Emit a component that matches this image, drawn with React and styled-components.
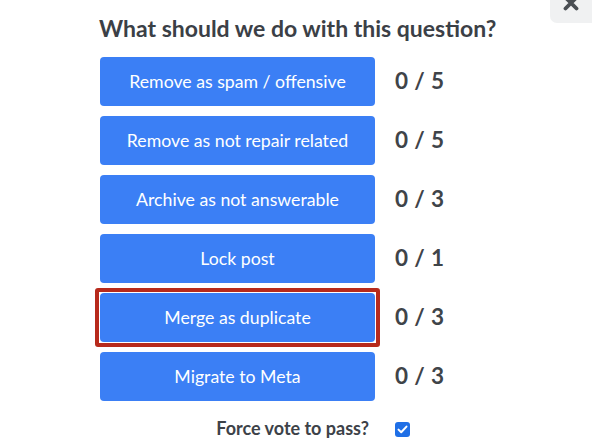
import React from "react";
import styled, { createGlobalStyle } from "styled-components";

const GlobalStyle = createGlobalStyle`
  html, body {
    margin: 0;
    padding: 0;
    background: #ffffff;
    font-family: Lato, "Liberation Sans", sans-serif;
    overflow: hidden;
  }
`;

const Page = styled.div`
  position: relative;
  width: 592px;
  height: 444px;
  padding: 14px 0 0 99px;
  box-sizing: border-box;
`;

const CloseButton = styled.div`
  position: absolute;
  top: -20px;
  right: -12px;
  width: 54px;
  height: 43px;
  border-radius: 7px;
  background: #f0f1f2;
  display: flex;
  align-items: flex-start;
  justify-content: flex-start;
  padding: 15px 0 0 13px;
  box-sizing: border-box;
  color: #4a4e53;
`;

const Title = styled.h2`
  margin: 0 0 15px 0;
  font-size: 23px;
  line-height: 28px;
  font-weight: 700;
  color: #3b4046;
`;

const Grid = styled.div`
  display: grid;
  grid-template-columns: 276px auto;
  column-gap: 20px;
  row-gap: 10px;
  align-items: center;
`;

const ActionButton = styled.button`
  position: relative;
  height: 49px;
  margin-left: 1px;
  border: none;
  border-radius: 4px;
  background: #3b7ff5;
  color: #ffffff;
  font-family: Lato, "Liberation Sans", sans-serif;
  font-size: 17.7px;
  font-weight: 400;

  &::after {
    content: "";
    display: ${(p) => (p.$selected ? "block" : "none")};
    position: absolute;
    inset: -5px;
    border: 4px solid #b72a1c;
    border-radius: 3px;
    pointer-events: none;
  }
`;

const Count = styled.span`
  font-size: 22.5px;
  font-weight: 700;
  color: #3f4449;
  letter-spacing: 0.4px;
  margin-top: -3px;
`;

const OptionRow = styled.div`
  grid-column: 1 / -1;
  display: grid;
  grid-template-columns: 276px auto;
  column-gap: 20px;
  align-items: center;
  margin-top: 6px;
`;

const Label = styled.label`
  text-align: right;
  padding-right: 6px;
  font-size: 18px;
  font-weight: 700;
  color: #3d4248;
`;

const Check = styled.span`
  width: 15px;
  height: 15px;
  margin: 2px 0 0 0;
  border-radius: 3px;
  background: #1f6fe6;
  display: flex;
  align-items: center;
  justify-content: center;
`;

const actions = [
  { label: "Remove as spam / offensive", count: "0 / 5" },
  { label: "Remove as not repair related", count: "0 / 5" },
  { label: "Archive as not answerable", count: "0 / 3" },
  { label: "Lock post", count: "0 / 1" },
  { label: "Merge as duplicate", count: "0 / 3", selected: true },
  { label: "Migrate to Meta", count: "0 / 3" },
];

export default function App() {
  return (
    <>
      <GlobalStyle />
      <Page>
        <CloseButton aria-label="Close">
          <svg width="16" height="16" viewBox="0 0 16 16">
            <path d="M2.5 2.5 L13.5 13.5 M13.5 2.5 L2.5 13.5" stroke="currentColor" strokeWidth="3.8" strokeLinecap="round" />
          </svg>
        </CloseButton>
        <Title>What should we do with this question?</Title>
        <Grid>
          {actions.map((a) => (
            <React.Fragment key={a.label}>
              <ActionButton $selected={a.selected}>{a.label}</ActionButton>
              <Count>{a.count}</Count>
            </React.Fragment>
          ))}
          <OptionRow>
            <Label>Force vote to pass?</Label>
            <Check>
              <svg width="11" height="9" viewBox="0 0 11 9">
                <path d="M1.5 4.6 L4.2 7.2 L9.5 1.6" fill="none" stroke="#fff" strokeWidth="2" strokeLinecap="round" strokeLinejoin="round" />
              </svg>
            </Check>
          </OptionRow>
        </Grid>
      </Page>
    </>
  );
}
